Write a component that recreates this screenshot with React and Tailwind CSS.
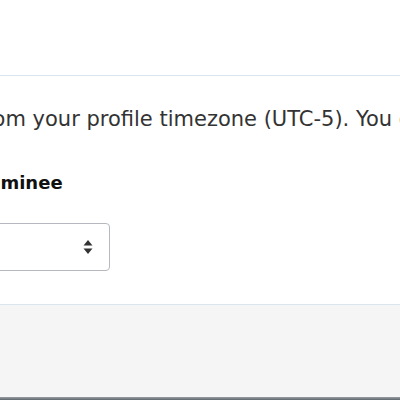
export default function App() {
    return (
        <div className="w-[400px] h-[400px] overflow-hidden bg-white font-['DejaVu_Sans',sans-serif] text-[#222]">
            {/* header strip */}
            <div className="h-[76px] border-b border-[#dbe5ee]" />

            {/* form body */}
            <div className="h-[229px] border-b border-[#dbe5ee] pt-[27px]">
                <p className="-ml-[23px] whitespace-nowrap text-[21px] leading-[32px] text-[#333]">
                    from your profile timezone (UTC-5). You can change it in your settings.
                </p>
                <div className="-ml-[27px]">
                    <label className="mt-[36px] block text-[18px] font-bold leading-[24px] text-[#111]">
                        Nominee
                    </label>
                    <div className="mt-[28px] flex h-[48px] w-[137px] items-center justify-end rounded-[4px] border border-[#b5b9bf] bg-white pr-[16px]">
                        <svg width="10" height="16" viewBox="0 0 10 16" className="fill-[#333]">
                            <path d="M5 1 L9.5 6.5 H0.5 Z" />
                            <path d="M5 15 L9.5 9.5 H0.5 Z" />
                        </svg>
                    </div>
                </div>
            </div>

            {/* footer */}
            <div className="h-[92px] bg-[#f5f5f5]" />
            <div className="h-[3px] bg-gradient-to-b from-[#9aa0a6] to-[#5d646b]" />
        </div>
    )
}
